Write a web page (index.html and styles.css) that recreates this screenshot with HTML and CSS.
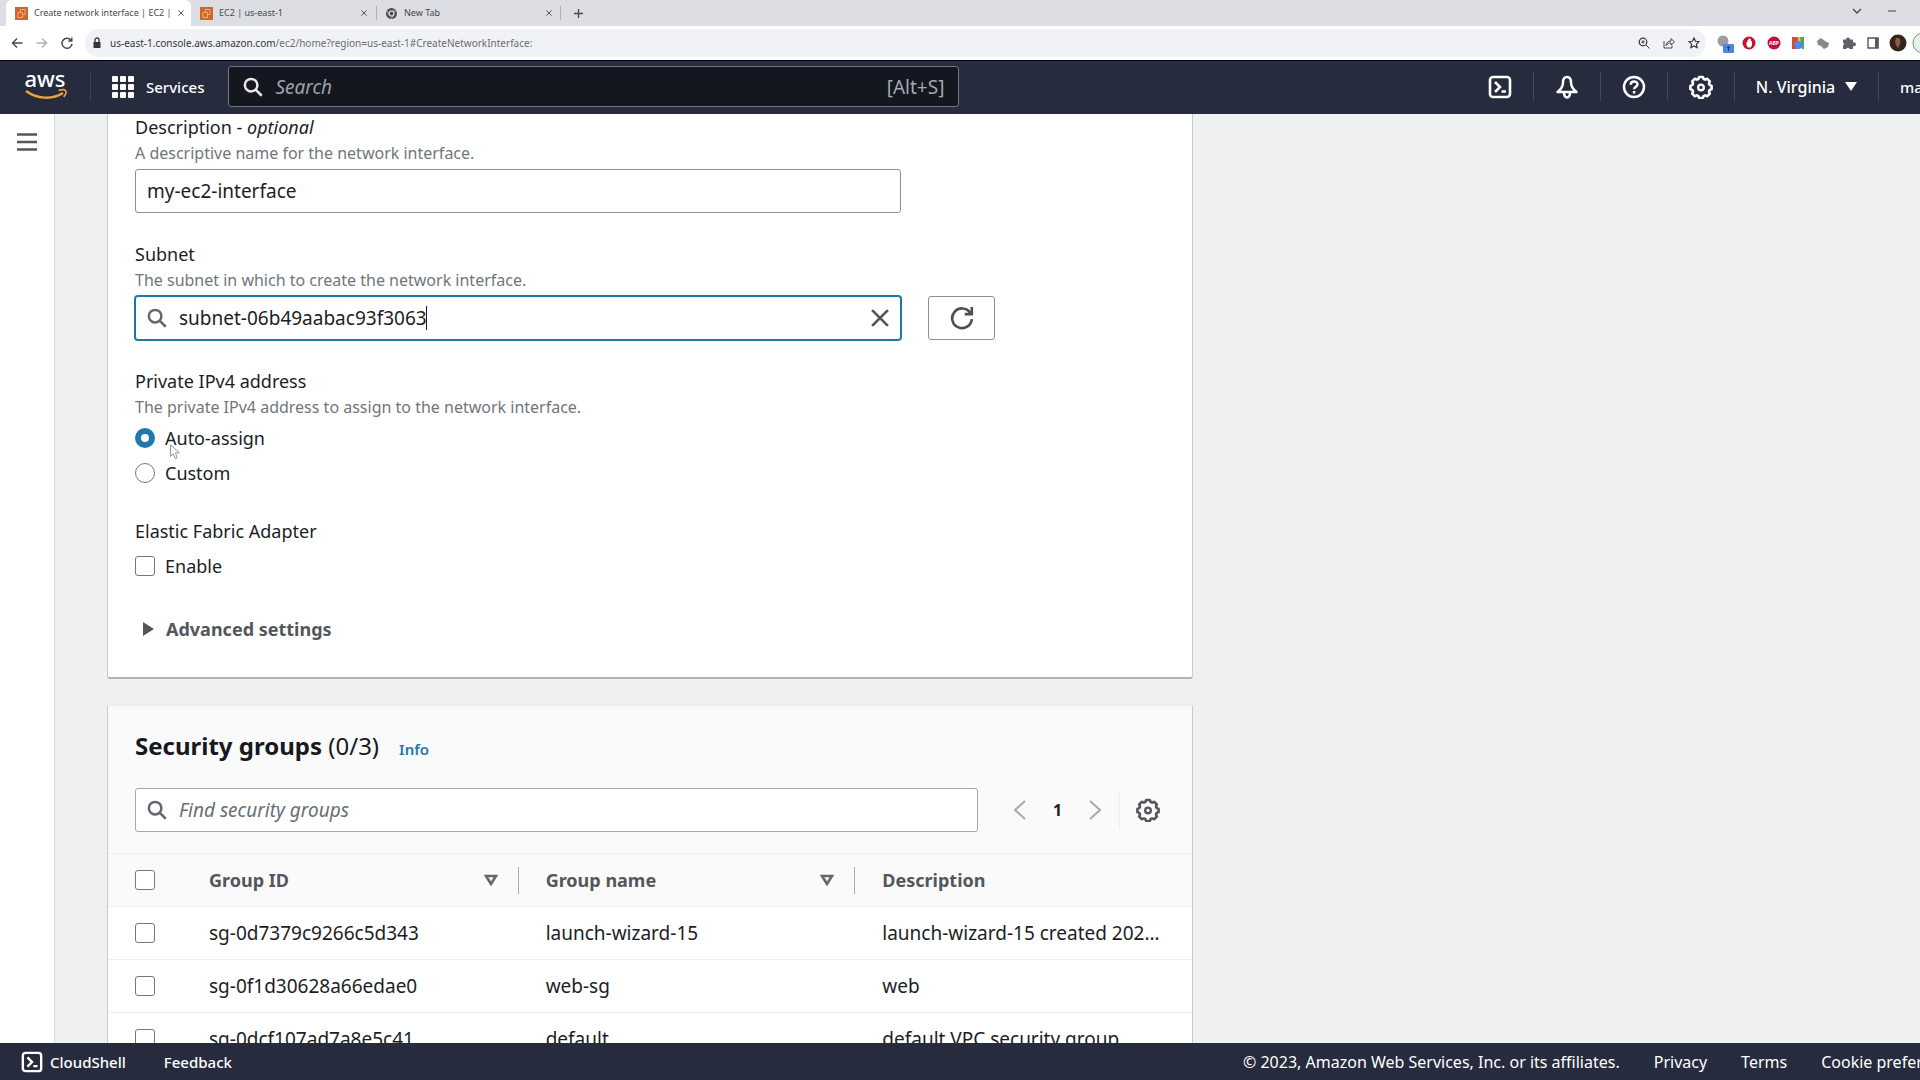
FILE: index.html
```html
<!DOCTYPE html>
<html lang="en">
<head>
    <meta charset="UTF-8">
    <meta name="viewport" content="width=device-width, initial-scale=1.0">
    <title>Create network interface | EC2 | us-east-1</title>
    <link rel="stylesheet" href="styles.css">
</head>
<body>
    <!-- Shared icons -->
    <svg class="sprite" aria-hidden="true">
        <symbol id="icon-search" viewBox="0 0 16 16">
            <circle cx="6.5" cy="6.5" r="5" fill="none" stroke="currentColor" stroke-width="2"/>
            <path d="M10.3 10.3 15 15" fill="none" stroke="currentColor" stroke-width="2"/>
        </symbol>
        <symbol id="icon-gear" viewBox="0 0 24 24">
            <path d="M10.2 2h3.6l1 2.1 1.3.5 2.2-.8 2.5 2.5-.8 2.2.5 1.3 2.1 1v3.4l-2.1 1-.5 1.3.8 2.2-2.5 2.5-2.2-.8-1.3.5-1 2.1h-3.6l-1-2.1-1.3-.5-2.2.8-2.5-2.5.8-2.2-.5-1.3-2.1-1v-3.4l2.1-1 .5-1.3-.8-2.2 2.5-2.5 2.2.8 1.3-.5z" fill="none" stroke="currentColor" stroke-width="2.6" stroke-linejoin="round"/>
            <circle cx="12" cy="12.4" r="2.8" fill="none" stroke="currentColor" stroke-width="2.4"/>
        </symbol>
        <symbol id="icon-shell" viewBox="0 0 24 24">
            <rect x="2" y="2" width="20" height="20" rx="3" fill="none" stroke="currentColor" stroke-width="2.6"/>
            <path d="M7 7l5 5-5 5M13.5 16.5H18" fill="none" stroke="currentColor" stroke-width="2.6"/>
        </symbol>
        <symbol id="icon-close" viewBox="0 0 16 16">
            <path d="M1 1l14 14M15 1 1 15" fill="none" stroke="currentColor" stroke-width="2.4"/>
        </symbol>
        <symbol id="icon-ec2" viewBox="0 0 13 13">
            <rect width="13" height="13" fill="#d0662a"/>
            <path d="M3 10.5v-5h4.5v5zM5.5 5.5v-3H10v5H7.5" fill="none" stroke="#f0aa78"/>
        </symbol>
    </svg>

    <div class="tab-strip">
        <div class="tab active">
            <svg class="favicon"><use href="#icon-ec2"/></svg>
            <span class="tab-title">Create network interface | EC2 |</span>
            <button class="tab-close" aria-label="Close tab"><svg><use href="#icon-close"/></svg></button>
        </div>
        <div class="tab">
            <svg class="favicon"><use href="#icon-ec2"/></svg>
            <span class="tab-title">EC2 | us-east-1</span>
            <button class="tab-close" aria-label="Close tab"><svg><use href="#icon-close"/></svg></button>
        </div>
        <div class="tab divided">
            <svg class="favicon" viewBox="0 0 13 13">
                <circle cx="6.5" cy="6.5" r="5.5" fill="#4a4d51"/>
                <circle cx="6.5" cy="6.5" r="2.5" fill="#4a4d51" stroke="#e6e8eb" stroke-width="1.2"/>
                <path d="M6.5 4H12M4.3 7.8 1.6 3.2M8.7 7.8 6 12" stroke="#c9ccd0" stroke-width=".8"/>
            </svg>
            <span class="tab-title">New Tab</span>
            <button class="tab-close" aria-label="Close tab"><svg><use href="#icon-close"/></svg></button>
        </div>
        <button class="new-tab" aria-label="New tab">
            <svg viewBox="0 0 10 10"><path d="M5 0v10M0 5h10" stroke="currentColor" stroke-width="1.5"/></svg>
        </button>
        <div class="window-controls">
            <svg viewBox="0 0 10 10"><path d="M1 3l4 4 4-4" fill="none" stroke="currentColor" stroke-width="1.3"/></svg>
            <svg viewBox="0 0 10 10"><path d="M1 5h8" stroke="currentColor"/></svg>
        </div>
    </div>

    <div class="toolbar">
        <button class="tool" aria-label="Back">
            <svg viewBox="0 0 12 12"><path d="M11.5 6h-10M6 1.5 1.5 6 6 10.5" fill="none" stroke="currentColor" stroke-width="1.5"/></svg>
        </button>
        <button class="tool muted" aria-label="Forward">
            <svg viewBox="0 0 12 12"><path d="M.5 6h10M6 1.5 10.5 6 6 10.5" fill="none" stroke="currentColor" stroke-width="1.5"/></svg>
        </button>
        <button class="tool" aria-label="Reload">
            <svg viewBox="0 0 12 12"><path d="M10 3.2A5 5 0 1 0 11 6.8M10.8.5V4H7.3" fill="none" stroke="currentColor" stroke-width="1.5"/></svg>
        </button>
        <div class="address-bar">
            <svg class="lock" viewBox="0 0 10 12"><rect x="1.5" y="5" width="7" height="6" fill="currentColor"/><path d="M3 5V3a2 2 0 0 1 4 0v2" fill="none" stroke="currentColor" stroke-width="1.3"/></svg>
            <span class="url">us-east-1.console.aws.amazon.com<span class="path">/ec2/home?region=us-east-1#CreateNetworkInterface:</span></span>
            <div class="address-actions">
                <svg viewBox="0 0 12 12"><circle cx="5" cy="5" r="3.8" fill="none" stroke="currentColor" stroke-width="1.2"/><path d="M8 8l3.5 3.5M3.3 5h3.4M5 3.3v3.4" stroke="currentColor"/></svg>
                <svg viewBox="0 0 12 12"><path d="M1 4v7h8V8.5M3 8.5c.5-3 2-4.5 5-4.5V1.500L11.500 5 8 8V6C6 6 4.500 6.500 3 8.500z" fill="none" stroke="currentColor" stroke-width=".9"/></svg>
                <svg viewBox="0 0 12 12"><path d="M6 1l1.5 3.3 3.5.4-2.6 2.4.7 3.5L6 8.900l-3.100 1.700.7-3.500L1 4.700l3.500-.4z" fill="none" stroke="currentColor" stroke-width="1.2"/></svg>
            </div>
        </div>
        <div class="extensions">
            <svg viewBox="0 0 18 18"><circle cx="9" cy="7" r="5.5" fill="#9a9da1"/><rect x="9" y="10" width="11" height="9" rx="1" fill="#4b86e0"/><path d="M14.5 17v-4.500M13 14l1.500-1.500L16 14" fill="none" stroke="#1c3f83"/></svg>
            <svg viewBox="0 0 18 18"><circle cx="10" cy="9" r="6.5" fill="#c4122f"/><path d="M7.500 8v3.500L9 13.500h2.500l1.500-2V7h-1V5h-1.200v-.5H9.500V6h-1v2z" fill="#fff"/></svg>
            <svg viewBox="0 0 18 18"><circle cx="10" cy="9" r="6.5" fill="#c70d3c"/><text x="10" y="11" class="abp">ABP</text></svg>
            <svg viewBox="0 0 18 18"><path d="M3 3h6v12H3z" fill="#d8483c"/><path d="M9 3h6v6H9z" fill="#e8bf45"/><path d="M11 3h4v12h-2z" fill="#4ba65b"/><circle cx="9.5" cy="11" r="4" fill="#4c8bf0"/></svg>
            <svg viewBox="0 0 18 18"><path d="M3 7l4-3 4 3 4 2-1 4-4 2-3-3-3-1z" fill="#85888c"/></svg>
            <svg viewBox="0 0 18 18"><path d="M4 5.500h3a2 2 0 1 1 4 0h3v3a2 2 0 1 1 0 3.500v3h-3.500a1.700 1.700 0 0 0-3.200 0H4v-3.500a1.700 1.700 0 0 0 0-3z" fill="#5f6368"/></svg>
            <svg viewBox="0 0 18 18"><path d="M4 4h10v10H4z" fill="none" stroke="#54585c" stroke-width="1.4"/><path d="M11 4h3.500v10H11z" fill="#54585c"/></svg>
            <svg viewBox="0 0 18 18"><circle cx="9" cy="9" r="8.5" fill="#33241f"/><path d="M7 4c4-1 5 3 4 6l-2 4c-2-2-4-6-2-10z" fill="#8b5d43"/></svg>
            <svg viewBox="0 0 6 18"><circle cx="9" cy="9" r="10" fill="#e5f3e6" stroke="#76947c"/></svg>
        </div>
    </div>

    <header class="aws-header">
        <a href="#" class="aws-logo" aria-label="AWS home">
            <svg viewBox="0 0 44 30">
                <text x="21" y="15" class="logo-text">aws</text>
                <path d="M2 19c11 8 26 9 37 2" fill="none" stroke="#eba43c" stroke-width="2.5"/>
                <path d="M34.5 18.5c3-1 6-1 7 0s.2 4-1.8 6.5" fill="none" stroke="#eba43c" stroke-width="1.6"/>
            </svg>
        </a>
        <button class="services">
            <svg viewBox="0 0 22 22" fill="currentColor">
                <rect width="6" height="6" rx="1"/><rect x="8" width="6" height="6" rx="1"/><rect x="16" width="6" height="6" rx="1"/>
                <rect y="8" width="6" height="6" rx="1"/><rect x="8" y="8" width="6" height="6" rx="1"/><rect x="16" y="8" width="6" height="6" rx="1"/>
                <rect y="16" width="6" height="6" rx="1"/><rect x="8" y="16" width="6" height="6" rx="1"/><rect x="16" y="16" width="6" height="6" rx="1"/>
            </svg>
            Services
        </button>
        <div class="global-search">
            <svg><use href="#icon-search"/></svg>
            <input type="text" placeholder="Search" aria-label="Search">
            <kbd>[Alt+S]</kbd>
        </div>
        <nav class="header-tools">
            <button class="header-tool" aria-label="CloudShell"><svg><use href="#icon-shell"/></svg></button>
            <button class="header-tool" aria-label="Notifications">
                <svg viewBox="0 0 24 24" fill="none" stroke="currentColor" stroke-width="2.5" stroke-linejoin="round"><path d="M12 2c-3 0-4 2.5-4 5.5 0 4-1.5 6.5-5.5 9.5h19c-4-3-5.5-5.500-5.500-9.500C16 4.500 15 2 12 2zM9 17.500c0 6.500 6 6.500 6 0"/></svg>
            </button>
            <button class="header-tool" aria-label="Help">
                <svg viewBox="0 0 24 24" fill="none" stroke="currentColor" stroke-width="2.5"><circle cx="12" cy="12" r="10"/><path d="M8.7 9.7c0-4.5 6.8-4.200 6.800-.4 0 2.500-3.400 2.300-3.400 5M12.100 16v2.400"/></svg>
            </button>
            <button class="header-tool" aria-label="Settings"><svg><use href="#icon-gear"/></svg></button>
            <button class="region">N. Virginia <span class="caret-down"></span></button>
            <button class="account">ma</button>
        </nav>
    </header>

    <div class="app">
        <aside class="side-nav">
            <button aria-label="Open navigation">
                <svg viewBox="0 0 20 18"><path d="M0 1.5h20M0 9h20M0 16.5h20" stroke="currentColor" stroke-width="2.6"/></svg>
            </button>
        </aside>

        <main class="content">
            <section class="panel details">
                <div class="field">
                    <label for="description">Description - <em>optional</em></label>
                    <p class="hint">A descriptive name for the network interface.</p>
                    <div class="control-row">
                        <input type="text" class="text-input" id="description" value="my-ec2-interface">
                    </div>
                </div>

                <div class="field">
                    <label for="subnet">Subnet</label>
                    <p class="hint">The subnet in which to create the network interface.</p>
                    <div class="control-row">
                        <div class="search-input focused">
                            <svg class="search-icon"><use href="#icon-search"/></svg>
                            <input type="text" id="subnet" value="subnet-06b49aabac93f3063">
                            <span class="text-caret"></span>
                            <button class="clear" aria-label="Clear"><svg><use href="#icon-close"/></svg></button>
                        </div>
                        <button class="refresh" aria-label="Refresh">
                            <svg viewBox="0 0 22 22"><path d="M18.5 6.2A9 9 0 1 0 20 12M20 1v6.5h-6.5" fill="none" stroke="currentColor" stroke-width="2.4"/></svg>
                        </button>
                    </div>
                </div>

                <fieldset class="field">
                    <legend>Private IPv4 address</legend>
                    <p class="hint">The private IPv4 address to assign to the network interface.</p>
                    <div class="option">
                        <input type="radio" name="ipv4" id="auto-assign" checked>
                        <label for="auto-assign">Auto-assign</label>
                        <svg class="pointer" viewBox="0 0 12 18"><path d="M1 1v13l3-3 2.5 5.5 2-1L6.5 10H11z" fill="#fff" stroke="#85888c"/></svg>
                    </div>
                    <div class="option">
                        <input type="radio" name="ipv4" id="custom">
                        <label for="custom">Custom</label>
                    </div>
                </fieldset>

                <fieldset class="field adapter">
                    <legend>Elastic Fabric Adapter</legend>
                    <div class="option">
                        <input type="checkbox" id="enable">
                        <label for="enable">Enable</label>
                    </div>
                </fieldset>

                <button class="advanced"><span class="caret-right"></span>Advanced settings</button>
            </section>

            <section class="panel groups">
                <div class="panel-header">
                    <div class="heading">
                        <h2>Security groups <span>(0/3)</span></h2>
                        <a href="#">Info</a>
                    </div>
                    <div class="filter-row">
                        <div class="search-input">
                            <svg class="search-icon"><use href="#icon-search"/></svg>
                            <input type="text" placeholder="Find security groups" aria-label="Find security groups">
                        </div>
                        <div class="pagination">
                            <button class="arrow" aria-label="Previous page" disabled><svg viewBox="0 0 12 20"><path d="M11 1 1 10l10 9" fill="none" stroke="currentColor" stroke-width="2"/></svg></button>
                            <button class="page">1</button>
                            <button class="arrow" aria-label="Next page" disabled><svg viewBox="0 0 12 20"><path d="M1 1l10 9-10 9" fill="none" stroke="currentColor" stroke-width="2"/></svg></button>
                            <button class="preferences" aria-label="Preferences"><svg><use href="#icon-gear"/></svg></button>
                        </div>
                    </div>
                </div>
                <table>
                    <thead>
                        <tr>
                            <th class="select"><input type="checkbox" aria-label="Select all"></th>
                            <th><div class="th-inner">Group ID <svg class="sort" viewBox="0 0 14 12"><path d="M2 2h10l-5 8z" fill="none" stroke="currentColor" stroke-width="2.6"/></svg></div></th>
                            <th><div class="th-inner">Group name <svg class="sort" viewBox="0 0 14 12"><path d="M2 2h10l-5 8z" fill="none" stroke="currentColor" stroke-width="2.6"/></svg></div></th>
                            <th><div class="th-inner">Description</div></th>
                        </tr>
                    </thead>
                    <tbody>
                        <tr>
                            <td class="select"><input type="checkbox" aria-label="Select launch-wizard-15"></td>
                            <td>sg-0d7379c9266c5d343</td>
                            <td>launch-wizard-15</td>
                            <td>launch-wizard-15 created 2023-04-12</td>
                        </tr>
                        <tr>
                            <td class="select"><input type="checkbox" aria-label="Select web-sg"></td>
                            <td>sg-0f1d30628a66edae0</td>
                            <td>web-sg</td>
                            <td>web</td>
                        </tr>
                        <tr>
                            <td class="select"><input type="checkbox" aria-label="Select default"></td>
                            <td>sg-0dcf107ad7a8e5c41</td>
                            <td>default</td>
                            <td>default VPC security group</td>
                        </tr>
                    </tbody>
                </table>
            </section>
        </main>
    </div>

    <footer class="aws-footer">
        <button class="cloudshell"><svg><use href="#icon-shell"/></svg>CloudShell</button>
        <a href="#">Feedback</a>
        <div class="legal">
            <span>© 2023, Amazon Web Services, Inc. or its affiliates.</span>
            <a href="#">Privacy</a>
            <a href="#">Terms</a>
            <a href="#">Cookie preferences</a>
        </div>
    </footer>
</body>
</html>
```
FILE: styles.css
```css
* {
    box-sizing: border-box;
}

body {
    display: flex;
    flex-direction: column;
    height: 100vh;
    margin: 0;
    overflow: hidden;
    background: #eff1f0;
    color: #1b1e24;
    font-family: "Noto Sans", "Open Sans", sans-serif;
    font-size: 18px;
    line-height: 26px;
}

button {
    display: flex;
    align-items: center;
    justify-content: center;
    padding: 0;
    border: 0;
    background: none;
    color: inherit;
    font: inherit;
    cursor: pointer;
}

input {
    font: inherit;
    color: inherit;
}

input[type="text"] {
    font-size: 19px;
}

a {
    text-decoration: none;
    color: inherit;
}

.sprite {
    display: none;
}

/* Browser tabs */
.tab-strip {
    display: flex;
    flex: none;
    height: 26px;
    padding-left: 6px;
    background: #dcdee3;
    color: #45484c;
    font-size: 9px;
    line-height: 14px;
}

.tab {
    display: flex;
    align-items: center;
    gap: 6px;
    width: 185px;
    padding: 0 9px;
}

.tab.active {
    background: #fff;
    border-radius: 6px 6px 0 0;
}

.tab.divided {
    background: linear-gradient(#aeb1b6, #aeb1b6) left / 1px 14px no-repeat, linear-gradient(#aeb1b6, #aeb1b6) right / 1px 14px no-repeat;
}

.favicon {
    flex: none;
    width: 13px;
    height: 13px;
}

.tab-title {
    flex: 1;
    white-space: nowrap;
}

.tab-close svg {
    width: 6px;
    height: 6px;
}

.new-tab {
    width: 34px;
}

.new-tab svg {
    width: 9px;
    height: 9px;
}

.window-controls {
    display: flex;
    align-items: center;
    gap: 25px;
    margin-left: auto;
    padding: 0 23px 4px 0;
}

.window-controls svg {
    width: 10px;
    height: 10px;
}

/* Browser toolbar */
.toolbar {
    display: flex;
    flex: none;
    align-items: center;
    height: 35px;
    padding-left: 4px;
    overflow: hidden;
    background: #fff;
    border-bottom: 1px solid #05060a;
    color: #484b4f;
}

.tool {
    width: 25px;
}

.tool svg {
    width: 12px;
    height: 12px;
}

.muted {
    color: #b1b3b6;
}

.address-bar {
    display: flex;
    flex: 1;
    align-items: center;
    height: 28px;
    margin-left: 6px;
    padding: 0 6px 0 7px;
    border-radius: 14px;
    background: #f1f2f5;
    color: #333639;
}

.lock {
    width: 10px;
    height: 12px;
    margin-right: 8px;
}

.url {
    font-size: 10px;
}

.url .path {
    color: #696d72;
}

.address-actions {
    display: flex;
    gap: 13px;
    margin-left: auto;
}

.address-actions svg {
    width: 12px;
    height: 12px;
}

.extensions {
    display: flex;
    gap: 7px;
    margin-left: 8px;
}

.extensions svg {
    width: 18px;
    height: 18px;
    overflow: visible;
}

.extensions svg:last-child {
    width: 6px;
}

.abp {
    fill: #fff;
    font-size: 5px;
    font-weight: 700;
    text-anchor: middle;
}

/* AWS header */
.aws-header {
    display: flex;
    flex: none;
    align-items: center;
    height: 53px;
    padding-bottom: 2px;
    background: #262b3e;
    color: #fff;
    font-size: 15px;
    font-weight: 500;
}

.aws-logo {
    display: flex;
    align-items: center;
    width: 91px;
    height: 29px;
    padding-left: 24px;
    border-right: 1px solid #3c4254;
}

.aws-logo svg {
    width: 44px;
    height: 30px;
    overflow: visible;
}

.logo-text {
    fill: #fff;
    font-size: 22px;
    font-weight: 500;
    text-anchor: middle;
}

.services {
    gap: 12px;
    padding: 0 24px 0 21px;
}

.services svg {
    width: 22px;
    height: 22px;
}

.global-search {
    display: flex;
    flex: 1;
    align-items: center;
    gap: 12px;
    max-width: 731px;
    height: 41px;
    padding: 0 14px;
    border: 1px solid #737881;
    border-radius: 3px;
    background: #14171f;
    font-size: 19px;
    font-weight: 400;
}

.global-search svg {
    width: 20px;
    height: 20px;
    color: #e5e7ea;
}

.global-search input {
    flex: 1;
    min-width: 0;
    padding: 0;
    border: 0;
    outline: 0;
    background: none;
}

.global-search input::placeholder {
    color: #9ba3ab;
    font-style: italic;
}

.global-search kbd {
    color: #a3abb2;
    font: inherit;
}

.header-tools {
    display: flex;
    flex: none;
    margin-left: auto;
    overflow: hidden;
}

.header-tools button {
    height: 29px;
    border-right: 1px solid #434859;
}

.header-tool {
    width: 67px;
}

.header-tool svg {
    width: 24px;
    height: 24px;
}

.region {
    gap: 10px;
    width: 144px;
    font-size: 16px;
    white-space: nowrap;
}

.caret-down {
    border: 6px solid transparent;
    border-top: 9px solid #fff;
    border-bottom: 0;
}

.header-tools .account {
    justify-content: flex-start;
    width: 41px;
    padding-left: 21px;
    border-right: 0;
}

/* Page body */
.app {
    display: flex;
    flex: 1;
    min-height: 0;
}

.side-nav {
    width: 55px;
    flex: none;
    padding: 19px 0 0 17px;
    border-right: 1px solid #d4d6d6;
    background: #fff;
    color: #53565b;
}

.side-nav svg {
    width: 20px;
    height: 18px;
}

.content {
    flex: 1;
    min-width: 0;
    padding-left: 52px;
    overflow: hidden;
}

.panel {
    max-width: 1086px;
    border: 1px solid #c9cbcc;
    background: #fff;
}

.details {
    padding: 0 27px 31px;
    border-top: 0;
    border-bottom: 2px solid #b0b3b4;
    border-radius: 0 0 3px 3px;
}

.field {
    margin: 0 0 28px;
    padding: 0;
    border: 0;
}

.field > label,
.field legend {
    display: block;
    padding: 0;
}

.hint {
    margin: 0;
    color: #70767c;
    font-size: 16px;
}

.control-row {
    display: grid;
    grid-template-columns: minmax(0, 766px) 67px;
    gap: 27px;
    margin-top: 3px;
}

.text-input {
    height: 44px;
    padding: 0 11px;
    border: 1px solid #8b9196;
    border-radius: 3px;
}

.search-input {
    position: relative;
    display: flex;
    flex: 1;
    align-items: center;
    gap: 12px;
    height: 44px;
    padding: 0 11px;
    border: 1px solid #a4a9ac;
    border-radius: 3px;
    background: #fff;
}

.search-input.focused {
    border-color: #1f77a8;
    box-shadow: 0 0 0 1px #1f77a8;
}

.search-input input {
    flex: 1;
    min-width: 0;
    padding: 0;
    border: 0;
    outline: 0;
    background: none;
}

.search-input input::placeholder {
    color: #686e74;
    font-style: italic;
}

.search-icon {
    flex: none;
    width: 20px;
    height: 20px;
    color: #63686e;
}

.text-caret {
    position: absolute;
    left: 290px;
    width: 1px;
    height: 24px;
    background: #16191f;
}

.clear svg {
    width: 18px;
    height: 18px;
    color: #53565b;
}

.refresh {
    border: 1px solid #8b9196;
    border-radius: 3px;
    color: #4c4f54;
}

.refresh svg {
    width: 24px;
    height: 24px;
}

.option {
    position: relative;
    display: flex;
    align-items: center;
    gap: 10px;
    height: 35px;
}

.adapter .option {
    margin-top: 4px;
}

input[type="checkbox"],
input[type="radio"] {
    flex: none;
    width: 20px;
    height: 20px;
    margin: 0;
    border: 1px solid #72797f;
    border-radius: 3px;
    background: #fff;
    appearance: none;
}

input[type="radio"] {
    border-radius: 50%;
}

input[type="radio"]:checked {
    border: 6px solid #1f7aab;
}

.pointer {
    position: absolute;
    left: 34px;
    top: 24px;
    width: 12px;
    height: 16px;
}

.advanced {
    gap: 12px;
    height: 35px;
    padding-left: 8px;
    color: #53565b;
    font-weight: 700;
}

.caret-right {
    border: 7px solid transparent;
    border-left: 11px solid #53565b;
    border-right: 0;
}

/* Security groups */
.groups {
    margin-top: 26px;
    border-top-color: #eaeced;
}

.panel-header {
    padding: 26px 27px 21px;
    background: #fafafa;
}

.heading {
    display: flex;
    align-items: baseline;
    gap: 20px;
}

.heading h2 {
    margin: 0;
    color: #16191f;
    font-size: 24px;
    line-height: 28px;
}

.heading h2 span {
    font-weight: 400;
}

.heading a {
    color: #2876ab;
    font-size: 15px;
    font-weight: 600;
    line-height: 20px;
}

.filter-row {
    display: flex;
    align-items: center;
    gap: 27px;
    margin-top: 28px;
}

.pagination {
    display: flex;
    align-items: center;
}

.arrow {
    width: 30px;
    color: #a6abaf;
}

.arrow svg {
    width: 12px;
    height: 20px;
}

.page {
    width: 45px;
    font-size: 16px;
    font-weight: 700;
}

.preferences {
    height: 38px;
    margin-left: 9px;
    padding: 0 5px 0 16px;
    border-left: 1px solid #eeeff0;
    color: #53565b;
}

.preferences svg {
    width: 24px;
    height: 24px;
}

table {
    width: 100%;
    border-collapse: collapse;
    table-layout: fixed;
}

th,
td {
    height: 53px;
    padding: 0 27px;
    border-top: 1px solid #eceeef;
    overflow: hidden;
    font-size: 19px;
    text-align: left;
    text-overflow: ellipsis;
    white-space: nowrap;
}

th {
    padding: 0;
    background: #fafafa;
    color: #53575c;
    font-size: 18px;
}

.select {
    width: 74px;
    padding: 0 0 0 27px;
}

.select input {
    display: block;
}

.th-inner {
    display: flex;
    align-items: center;
    justify-content: space-between;
    height: 27px;
    padding: 0 20px 0 27px;
    border-right: 1px solid #a9adb0;
}

th:last-child .th-inner {
    border-right: 0;
}

.sort {
    width: 14px;
    height: 12px;
    color: #63686d;
}

/* Footer */
.aws-footer {
    display: flex;
    flex: none;
    align-items: center;
    height: 37px;
    padding-left: 21px;
    overflow: hidden;
    background: #262b3e;
    color: #fff;
    font-size: 15px;
    font-weight: 500;
    white-space: nowrap;
}

.cloudshell {
    gap: 7px;
    margin-right: 38px;
}

.cloudshell svg {
    width: 22px;
    height: 22px;
}

.legal {
    display: flex;
    flex: 0 0 677px;
    gap: 34px;
    margin-left: auto;
    overflow: hidden;
    font-size: 16px;
    font-weight: 400;
}
```
